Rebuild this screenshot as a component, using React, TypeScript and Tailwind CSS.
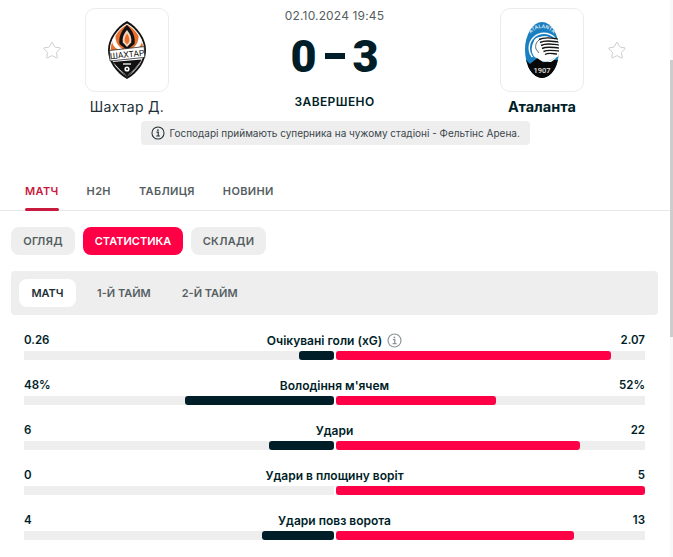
import { Star } from 'lucide-react'

const stats = [
  { name: 'Очікувані голи (xG)', home: '0.26', away: '2.07', homeW: 11.2, awayW: 89, info: true },
  { name: "Володіння м'ячем", home: '48%', away: '52%', homeW: 48, awayW: 52 },
  { name: 'Удари', home: '6', away: '22', homeW: 21, awayW: 79 },
  { name: 'Удари в площину воріт', home: '0', away: '5', homeW: 0, awayW: 100 },
  { name: 'Удари повз ворота', home: '4', away: '13', homeW: 23.2, awayW: 77 },
]

function InfoIcon({ size, color }: { size: number; color: string }) {
  return (
    <svg width={size} height={size} viewBox="0 0 16 16" fill="none" stroke={color} className="shrink-0">
      <circle cx="8" cy="8" r="6.9" strokeWidth="1.2" />
      <path d="M6.3 7h2v4.2M6 11.4h4.2" strokeWidth="1.3" />
      <circle cx="7.9" cy="4.7" r="1" fill={color} stroke="none" />
    </svg>
  )
}

function ShakhtarLogo() {
  return (
    <svg width="38" height="58" viewBox="0 0 38 58" className="overflow-visible">
      <path d="M19 0C30 6 38 18 38 29S30 52 19 58C8 52 0 40 0 29S8 6 19 0Z" fill="#111" />
      <path d="M19 2.5C29 8 36.2 19 36.2 29S29 50 19 55.5C9 50 1.8 39 1.8 29S9 8 19 2.5Z" fill="#fff" />
      <path d="M19 3.5C28 9 35 18.5 35.4 29H2.6C3 18.5 10 9 19 3.5Z" fill="#e8702c" />
      <path d="M19 4C25 10 27.5 16 26.5 23L19 29L11.5 23C10.5 16 13 10 19 4Z" fill="#111" />
      <path d="M19 9C22.4 13 24 17 23.2 21.5L19 26L14.8 21.5C14 17 15.6 13 19 9Z" fill="#f3d3bd" />
      <path d="M19 12.5C21 15.2 21.8 18 21.1 21L19 23.6L16.9 21C16.2 18 17 15.2 19 12.5Z" fill="#e8702c" />
      <path d="M7.5 14C7 20 9.5 25 15 28.5H10C6 26.5 4 23 4 19.5Z" fill="#fff" />
      <path d="M30.5 14C31 20 28.5 25 23 28.5H28C32 26.5 34 23 34 19.5Z" fill="#fff" />
      <path d="M1.6 29.5L36.2 25.6L36.8 36.4L2 40Z" fill="#fff" stroke="#111" strokeWidth="0.7" />
      <text x="19" y="36.4" textAnchor="middle" fontSize="8.5" fontWeight="400" fill="#111" transform="rotate(-6 19 33)" fontFamily="Roboto, sans-serif">ШАХТАР</text>
      <path d="M4.5 41L33.5 38.5C31 45 26 51 19 55.5C12 51 7 46 4.5 41Z" fill="#111" />
      <path d="M5 41C9 46 13 50 19 54.5C13 51 8 47 5 41Z" fill="#fff" />
      <path d="M33 39C29 46 25 50 19 54.5C25 51 30 46 33 39Z" fill="#fff" />
      <rect x="15" y="42" width="8" height="2" fill="#aaa" />
      <circle cx="19" cy="48" r="2.6" fill="#fff" />
      <circle cx="19" cy="48" r="1" fill="#111" />
    </svg>
  )
}

function AtalantaLogo() {
  return (
    <svg width="34" height="56" viewBox="0 0 34 56">
      <defs>
        <clipPath id="oval">
          <ellipse cx="17" cy="28" rx="17" ry="28" />
        </clipPath>
        <path id="arc" d="M3 20A14 14 0 0 1 31 20" />
      </defs>
      <g clipPath="url(#oval)">
        <rect width="34" height="56" fill="#1a7fc0" />
        <rect y="38" width="34" height="18" fill="#080808" />
        <circle cx="19" cy="26" r="15.5" fill="#fff" />
        <circle cx="19" cy="26" r="14" fill="#1a7fc0" />
        <circle cx="19.5" cy="27" r="12.8" fill="#fff" />
        <path d="M3 43L12 36L18 40H34V56H0Z" fill="#080808" />
        <path d="M0 37L8 35L12 36L5 42Z" fill="#1a7fc0" />
        <path d="M10 17C15 14 22 14 26 16L34 19V34C28 37 22 38 19 35C14 37 8.5 32 8.5 26C8 22 8.5 19 10 17Z" fill="#fff" />
        <g stroke="#161616" strokeWidth="1.4" fill="none">
          <path d="M14 17.5C20 14.5 26 16 34 17" />
          <path d="M15 20.5C21 17.5 27 19.5 34 20" />
          <path d="M16 23.5C22 20.5 27 22.5 34 23" />
          <path d="M17 26.5C22 24 27 25.5 34 26" />
          <path d="M18.5 29.5C23 27.5 27 28.5 34 29" />
          <path d="M20 32.5C23 30.5 27 31.5 32 32" />
        </g>
        <path d="M14 18C11 20 10 24 11 27L14 31" stroke="#444" strokeWidth="0.8" fill="none" />
        <text fontSize="5.2" fontWeight="500" fill="#e4f0f8" fontFamily="Roboto, sans-serif">
          <textPath href="#arc" startOffset="50%" textAnchor="middle">ATALANTA</textPath>
        </text>
        <text x="17" y="50.5" textAnchor="middle" fontSize="7.5" fontWeight="500" fill="#e5e5e5" fontFamily="Roboto, sans-serif">1907</text>
      </g>
    </svg>
  )
}

function LogoBox({ children }: { children: React.ReactNode }) {
  return (
    <div className="flex h-[84px] w-[84px] items-center justify-center rounded-[10px] border border-[#ececec] bg-white">
      {children}
    </div>
  )
}

function FavStar() {
  return (
    <div className="flex h-[84px] w-5 items-center justify-center">
      <Star size={21} strokeWidth={1.1} color="#c4c8c9" />
    </div>
  )
}

function StatRow({ stat }: { stat: (typeof stats)[number] }) {
  return (
    <div className="h-[45px]">
      <div className="grid h-[21px] grid-cols-[1fr_auto_1fr] items-center text-[12px] font-semibold leading-none text-[#001e28]">
        <span className="text-[11.5px]">{stat.home}</span>
        <span className="flex items-center gap-[5px]">
          {stat.name}
          {stat.info && <InfoIcon size={15} color="#8a9396" />}
        </span>
        <span className="text-right text-[11.5px]">{stat.away}</span>
      </div>
      <div className="flex h-[9px] gap-[2px]">
        <div className="flex flex-1 justify-end bg-[#eeeeee]">
          {stat.homeW > 0 && (
            <div className="h-full rounded-[3px] bg-[#001e28]" style={{ width: `${stat.homeW}%` }} />
          )}
        </div>
        <div className="flex-1 bg-[#eeeeee]">
          <div className="h-full rounded-[3px] bg-[#ff0046]" style={{ width: `${stat.awayW}%` }} />
        </div>
      </div>
    </div>
  )
}

export default function App() {
  return (
    <div className="relative h-[557px] w-[673px] overflow-hidden bg-white font-['Inter',sans-serif] text-[#001e28]">
      {/* scrollbar */}
      <div className="absolute right-0 top-0 h-full w-[3px] bg-[#f8f8f8]">
        <div className="absolute top-[60px] h-[277px] w-full bg-[#cdcdcd]" />
      </div>

      <div className="w-[670px]">
        {/* match header */}
        <div className="flex h-[116px] items-start gap-[23px] pl-[42px] pr-[43px] pt-2">
          <FavStar />
          <div className="flex w-[84px] flex-col items-center">
            <LogoBox>
              <ShakhtarLogo />
            </LogoBox>
            <div className="mt-[5px] whitespace-nowrap text-[14px] leading-[20px] tracking-[0.3px] text-[#222f36]">Шахтар Д.</div>
          </div>
          <div className="flex flex-1 flex-col items-center">
            <div className="text-[12px] leading-[16px] tracking-[0.15px] text-[#555e61]">02.10.2024 19:45</div>
            <div className="mt-[9px] flex h-[46px] items-center gap-[8px] font-['Roboto',sans-serif] text-[45px] font-black leading-none">
              <span>0</span>
              <span className="h-[6px] w-[20px] bg-[#001e28]" />
              <span>3</span>
            </div>
            <div className="mt-[15px] text-[12px] font-semibold leading-[16px] tracking-[0.4px]">ЗАВЕРШЕНО</div>
          </div>
          <div className="flex w-[84px] flex-col items-center">
            <LogoBox>
              <AtalantaLogo />
            </LogoBox>
            <div className="mt-[5px] whitespace-nowrap text-[14.5px] font-bold leading-[20px]">Аталанта</div>
          </div>
          <FavStar />
        </div>

        <div className="mt-[5px] flex justify-center">
          <div className="flex h-[24px] w-[389px] items-center gap-[5px] whitespace-nowrap rounded-[4px] bg-[#eeeeee] pl-[10px] text-[10px] text-[#3a464c]">
            <InfoIcon size={14} color="#222f36" />
            Господарі приймають суперника на чужому стадіоні - Фельтінс Арена.
          </div>
        </div>

        {/* tabs */}
        <div className="mt-[32px] flex h-[34px] gap-[28px] border-b border-[#e8e8e8] pl-[25px] text-[11px] font-semibold tracking-[0.35px] text-[#555e61]">
          <div className="relative h-[34px] pt-[6px] text-[#c8193f]">
            МАТЧ
            <div className="absolute bottom-0 left-0 h-[3px] w-full rounded-[2px] bg-[#c8193f]" />
          </div>
          <div className="pt-[6px]">H2H</div>
          <div className="pt-[6px]">ТАБЛИЦЯ</div>
          <div className="pt-[6px]">НОВИНИ</div>
        </div>

        <div className="mt-[16px] flex gap-2 pl-[11px] text-[11px] font-semibold tracking-[0.3px]">
          <div className="flex h-[28px] w-[64px] items-center justify-center rounded-[8px] bg-[#eeeeee] text-[#555e61]">ОГЛЯД</div>
          <div className="flex h-[28px] w-[100px] items-center justify-center rounded-[8px] bg-[#ff0046] tracking-normal text-white">СТАТИСТИКА</div>
          <div className="flex h-[28px] w-[75px] items-center justify-center rounded-[8px] bg-[#eeeeee] text-[#555e61]">СКЛАДИ</div>
        </div>

        {/* period switch */}
        <div className="ml-[11px] mr-[12px] mt-[16px] flex h-[44px] items-center rounded-[4px] bg-[#eeeeee] pl-2 text-[11px] font-semibold text-[#555e61]">
          <div className="flex h-[28px] w-[57px] items-center justify-center rounded-[8px] bg-white text-[#222f36]">МАТЧ</div>
          <div className="ml-[21px]">1-Й ТАЙМ</div>
          <div className="ml-[31px]">2-Й ТАЙМ</div>
        </div>

        {/* stats */}
        <div className="mt-[15px] pl-[24px] pr-[25px]">
          {stats.map(s => (
            <StatRow key={s.name} stat={s} />
          ))}
        </div>
      </div>
    </div>
  )
}
